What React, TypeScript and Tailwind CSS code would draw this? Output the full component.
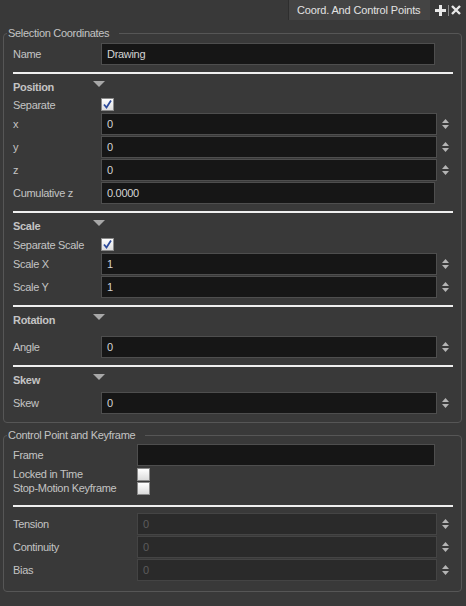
import React from 'react';

// Small spin arrows shown right of numeric fields
const SpinArrows = () => (
  <div className="w-[16px] flex justify-center">
    <svg width="7" height="10" viewBox="0 0 7 10">
      <polygon points="3.5,0 7,4 0,4" fill="#b4b4b4" />
      <polygon points="0,6 7,6 3.5,10" fill="#b4b4b4" />
    </svg>
  </div>
);

const Check = ({ checked }: { checked?: boolean }) => (
  <div className="w-[13px] h-[13px] border border-[#8a8a8a] bg-gradient-to-b from-[#ffffff] to-[#dcdcdc] flex items-center justify-center">
    {checked && (
      <svg width="11" height="11" viewBox="0 0 11 11">
        <path d="M2 5.5 L4.5 8.5 L9 1.5" stroke="#2c4a9c" strokeWidth="1.8" fill="none" />
      </svg>
    )}
  </div>
);

const Field = ({ value, width, disabled }: { value?: string; width: string; disabled?: boolean }) => (
  <div
    className={`h-[22px] ${width} border flex items-center pl-[5px] ${
      disabled ? 'bg-[#2a2a2a] border-[#444444] text-[#5c5c5c]' : 'bg-[#161616] border-[#4e4e4e] text-[#d4d4d4]'
    }`}
  >
    {value}
  </div>
);

const Divider = ({ className = '' }: { className?: string }) => (
  <div className={`h-[2px] bg-[#efefef] ${className}`} />
);

const SectionHeader = ({ title, className = '' }: { title: string; className?: string }) => (
  <div className={`h-[14px] flex items-center ${className}`}>
    <span className="w-[80px] font-bold">{title}</span>
    <svg width="12" height="7" viewBox="0 0 12 7" className="-mt-[5px]">
      <polygon points="0,0 12,0 6,6" fill="#a8a8a8" />
    </svg>
  </div>
);

const Row = ({
  label,
  labelW,
  className = '',
  h = 'h-[22px]',
  children,
}: {
  label: string;
  labelW: string;
  className?: string;
  h?: string;
  children: React.ReactNode;
}) => (
  <div className={`flex items-center ${h} ${className}`}>
    <span className={`${labelW} shrink-0`}>{label}</span>
    {children}
  </div>
);

export default function App() {
  const l1 = 'w-[88px]';
  const l2 = 'w-[124px]';

  return (
    <div className="w-[466px] h-[606px] bg-[#393939] text-[#c4c4c4] text-[11px] leading-[14px] tracking-[-0.3px] font-['Liberation_Sans',Arial,sans-serif] overflow-hidden">
      {/* title bar with tab */}
      <div className="h-[20px] flex justify-end items-stretch">
        <div className="w-[142px] bg-[#444444] border-l border-[#2e2e2e] text-[#e2e2e2] flex items-center pl-[8px] tracking-[-0.15px]">
          Coord. And Control Points
        </div>
        <div className="w-[36px] flex items-center pl-[5px] gap-[2px]">
          <svg width="11" height="11" viewBox="0 0 11 11">
            <rect x="4" y="0" width="3" height="11" fill="#e8e8e8" />
            <rect x="0" y="4" width="11" height="3" fill="#e8e8e8" />
          </svg>
          <div className="w-px h-[11px] bg-[#8a8a8a]" />
          <svg width="10" height="10" viewBox="0 0 10 10">
            <path d="M1 1 L9 9 M9 1 L1 9" stroke="#e8e8e8" strokeWidth="2.4" />
          </svg>
        </div>
      </div>

      {/* Selection Coordinates */}
      <fieldset className="ml-[3px] mt-[6px] w-[458px] border border-[#565656] rounded-[4px] pl-[9px] pr-[8px] pt-[3px] pb-[8px]">
        <legend className="-ml-[6px] pl-[1px] pr-[10px]">Selection Coordinates</legend>

        <Row label="Name" labelW={l1}>
          <Field value="Drawing" width="w-[334px]" />
        </Row>
        <Divider className="mt-[7px]" />

        <SectionHeader title="Position" className="mt-[6px]" />
        <Row label="Separate" labelW={l1} h="h-[13px]" className="mt-[4px]">
          <Check checked />
        </Row>
        <Row label="x" labelW={l1} className="mt-[2px]">
          <Field value="0" width="w-[336px]" />
          <SpinArrows />
        </Row>
        <Row label="y" labelW={l1} className="mt-[1px]">
          <Field value="0" width="w-[336px]" />
          <SpinArrows />
        </Row>
        <Row label="z" labelW={l1} className="mt-[1px]">
          <Field value="0" width="w-[336px]" />
          <SpinArrows />
        </Row>
        <Row label="Cumulative z" labelW={l1} className="mt-[1px]">
          <Field value="0.0000" width="w-[334px]" />
        </Row>
        <Divider className="mt-[7px]" />

        <SectionHeader title="Scale" className="mt-[6px]" />
        <Row label="Separate Scale" labelW={l1} h="h-[13px]" className="mt-[5px]">
          <Check checked />
        </Row>
        <Row label="Scale X" labelW={l1} className="mt-[2px]">
          <Field value="1" width="w-[336px]" />
          <SpinArrows />
        </Row>
        <Row label="Scale Y" labelW={l1} className="mt-[1px]">
          <Field value="1" width="w-[336px]" />
          <SpinArrows />
        </Row>
        <Divider className="mt-[7px]" />

        <SectionHeader title="Rotation" className="mt-[6px]" />
        <Row label="Angle" labelW={l1} className="mt-[9px]">
          <Field value="0" width="w-[336px]" />
          <SpinArrows />
        </Row>
        <Divider className="mt-[7px]" />

        <SectionHeader title="Skew" className="mt-[6px]" />
        <Row label="Skew" labelW={l1} className="mt-[5px]">
          <Field value="0" width="w-[336px]" />
          <SpinArrows />
        </Row>
      </fieldset>

      {/* Control Point and Keyframe */}
      <fieldset className="ml-[3px] mt-[5px] w-[458px] border border-[#565656] rounded-[4px] pl-[9px] pr-[8px] pt-[2px] pb-[10px]">
        <legend className="-ml-[6px] pl-[1px] pr-[10px]">Control Point and Keyframe</legend>

        <Row label="Frame" labelW={l2}>
          <Field width="w-[298px]" />
        </Row>
        <Row label="Locked in Time" labelW={l2} h="h-[14px]" className="mt-[1px]">
          <Check />
        </Row>
        <Row label="Stop-Motion Keyframe" labelW={l2} h="h-[14px]">
          <Check />
        </Row>
        <Divider className="mt-[10px]" />

        <Row label="Tension" labelW={l2} className="mt-[6px]">
          <Field value="0" width="w-[300px]" disabled />
          <SpinArrows />
        </Row>
        <Row label="Continuity" labelW={l2} className="mt-[1px]">
          <Field value="0" width="w-[300px]" disabled />
          <SpinArrows />
        </Row>
        <Row label="Bias" labelW={l2} className="mt-[1px]">
          <Field value="0" width="w-[300px]" disabled />
          <SpinArrows />
        </Row>
      </fieldset>
    </div>
  );
}
